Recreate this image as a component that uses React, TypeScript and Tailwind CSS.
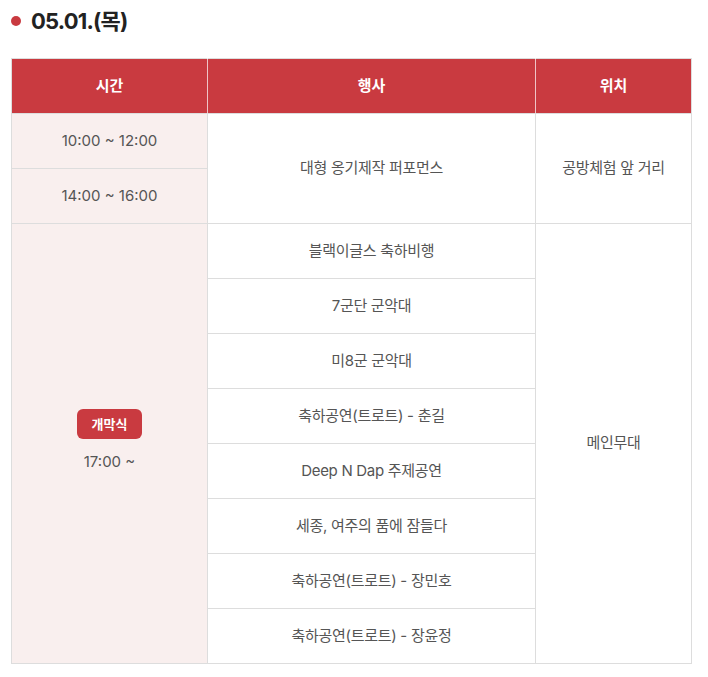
import React from "react";

const font = { fontFamily: 'Inter, "Noto Sans CJK KR", sans-serif' };

const events = [
  "블랙이글스 축하비행",
  "7군단 군악대",
  "미8군 군악대",
  "축하공연(트로트) - 춘길",
  "Deep N Dap 주제공연",
  "세종, 여주의 품에 잠들다",
  "축하공연(트로트) - 장민호",
  "축하공연(트로트) - 장윤정",
];

export default function App() {
  const td = "border border-[#dddddd] text-center align-middle h-[55px] p-0";
  return (
    <div className="bg-white w-[708px] h-[677px] text-[#555555]" style={font}>
      <div className="flex items-center pl-[11px] pt-[7px] h-[28px] box-content">
        <span className="w-[10px] h-[10px] rounded-full bg-[#c93a40]" />
        <span className="ml-[10px] text-[22px] font-bold text-[#222222] tracking-[-0.8px] leading-none">
          05.01.(목)
        </span>
      </div>
      <table className="ml-[11px] mt-[23px] border-collapse w-[680px] table-fixed text-[15px]">
        <colgroup>
          <col className="w-[196px]" />
          <col className="w-[328px]" />
          <col className="w-[156px]" />
        </colgroup>
        <thead>
          <tr>
            <th className="bg-[#c93a40] text-white font-bold h-[55px] border border-[#dddddd] border-r-white/70">시간</th>
            <th className="bg-[#c93a40] text-white font-bold h-[55px] border border-[#dddddd] border-r-white/70">행사</th>
            <th className="bg-[#c93a40] text-white font-bold h-[55px] border border-[#dddddd]">위치</th>
          </tr>
        </thead>
        <tbody>
          <tr>
            <td className={`${td} bg-[#f9efee]`}>10:00 ~ 12:00</td>
            <td className={`${td} tracking-[-0.3px]`} rowSpan={2}>대형 옹기제작 퍼포먼스</td>
            <td className={`${td} tracking-[-0.3px]`} rowSpan={2}>공방체험 앞 거리</td>
          </tr>
          <tr>
            <td className={`${td} bg-[#f9efee]`}>14:00 ~ 16:00</td>
          </tr>
          {events.map((e, i) => (
            <tr key={i}>
              {i === 0 && (
                <td className={`${td} bg-[#f9efee]`} rowSpan={events.length}>
                  <div className="flex flex-col items-center pb-[4px]">
                    <span className="bg-[#c93a40] text-white font-bold text-[13px] rounded-[6px] w-[65px] h-[30px] flex items-center justify-center">
                      개막식
                    </span>
                    <span className="mt-[12px]">17:00 ~</span>
                  </div>
                </td>
              )}
              <td className={`${td} tracking-[-0.3px]`}>{e}</td>
              {i === 0 && (
                <td className={`${td} tracking-[-0.3px]`} rowSpan={events.length}>
                  메인무대
                </td>
              )}
            </tr>
          ))}
        </tbody>
      </table>
    </div>
  );
}
